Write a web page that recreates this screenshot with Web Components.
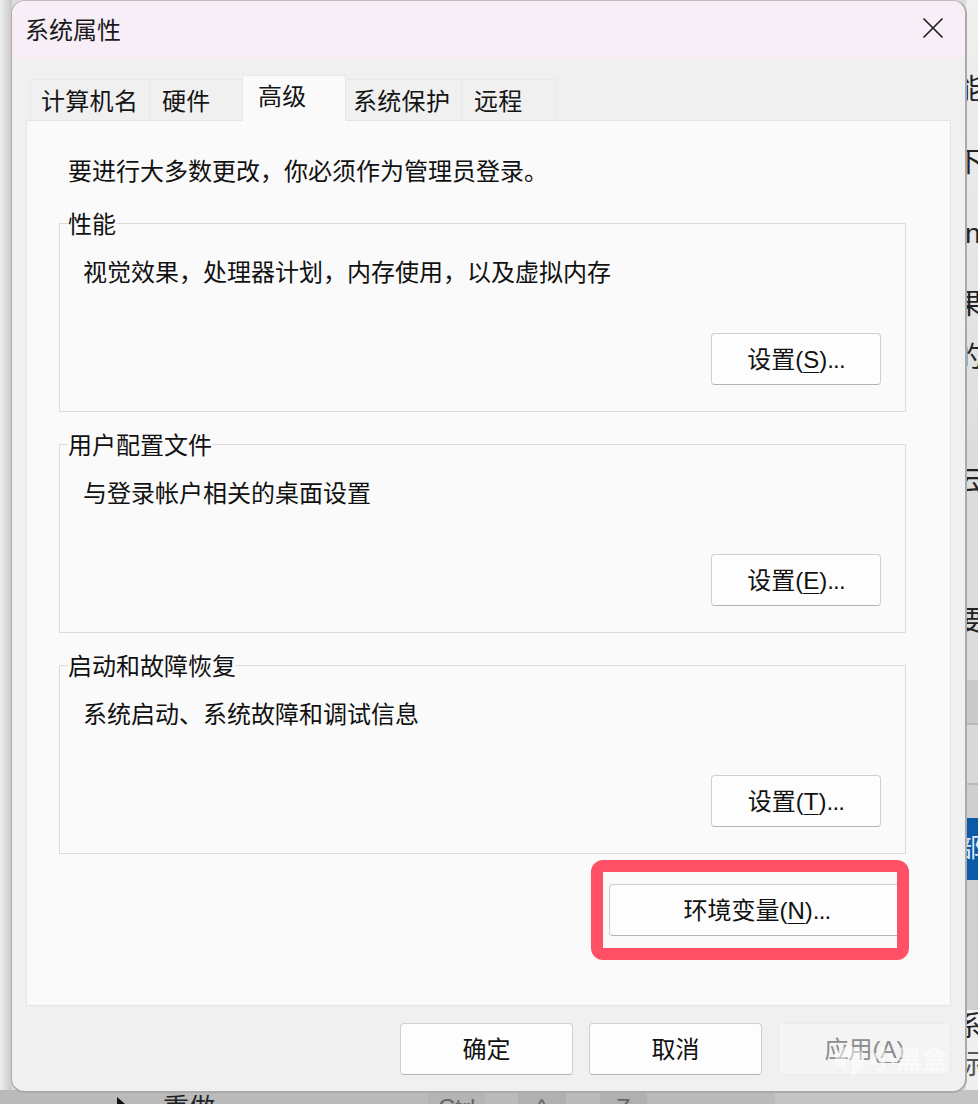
<!DOCTYPE html>
<html>
<head>
<meta charset="utf-8">
<title>系统属性</title>
<style>
  html, body { margin: 0; padding: 0; height: 1104px; overflow: hidden; }
  body { background: #e0e0e0; font-family: "Liberation Sans", "Noto Sans CJK SC", sans-serif; color: #111; }
</style>
</head>
<body>
<desk-backdrop></desk-backdrop>
<sys-window heading="系统属性">
  <sys-tabs slot="tabs">
    <sys-tab style="--w:120px;--p:10px">计算机名</sys-tab>
    <sys-tab style="--w:94px;--p:12px">硬件</sys-tab>
    <sys-tab active style="--w:104px;--p:15px">高级</sys-tab>
    <sys-tab style="--w:117px;--p:7px">系统保护</sys-tab>
    <sys-tab style="--w:95px;--p:12px">远程</sys-tab>
  </sys-tabs>
  <p-note>要进行大多数更改，你必须作为管理员登录。</p-note>
  <sys-group legend="性能" hint="视觉效果，处理器计划，内存使用，以及虚拟内存" key="S"></sys-group>
  <sys-group legend="用户配置文件" hint="与登录帐户相关的桌面设置" key="E"></sys-group>
  <sys-group legend="启动和故障恢复" hint="系统启动、系统故障和调试信息" key="T"></sys-group>
  <red-frame>
    <sys-button wide label="环境变量" key="N" tail="..."></sys-button>
  </red-frame>
  <sys-button slot="footer" style="--btn-w:173px" label="确定"></sys-button>
  <sys-button slot="footer" style="--btn-w:173px" label="取消"></sys-button>
  <sys-button slot="footer" style="--btn-w:173px" disabled label="应用" key="A"></sys-button>
</sys-window>
<box-mark></box-mark>
<script>
class DeskBackdrop extends HTMLElement {
  constructor() {
    super();
    this.attachShadow({ mode: "open" });
    const bits = [
      ["能", 90, 955], ["下", 163, 955], ["n", 234, 965], ["果", 305, 955], ["的", 358, 955], ["云", 482, 955], ["要", 622, 955]
    ];
    this.shadowRoot.innerHTML = `
<style>
  :host { position: absolute; inset: 0; display: block; overflow: hidden; background: #dcdcdc; font: 28px/34px "Liberation Sans", "Noto Sans CJK SC", sans-serif; color: #222; }
  .left { position: absolute; left: 0; top: 0; bottom: 0; width: 12px; background: linear-gradient(90deg, #ededed, #c8c8c8); }
  .top { position: absolute; left: 966px; top: 0; width: 12px; height: 440px; background: linear-gradient(180deg, #f0f0f0, #dedede); }
  .bit { position: absolute; }
  .band { position: absolute; left: 966px; width: 12px; }
  .blue { position: absolute; left: 966px; top: 818px; width: 12px; height: 62px; background: #0b5aa8; color: #dfe9f4; font-size: 26px; line-height: 60px; overflow: hidden; }
  .blue span { margin-left: -10px; }
  .bottom { position: absolute; left: 0; right: 0; top: 1090px; height: 14px; background: #bababa; }
  .seg { position: absolute; top: 1090px; height: 14px; }
  .row { position: absolute; top: 1091px; font-size: 26px; line-height: 34px; color: #222; }
  .muted { color: #666; font-size: 24px; }
</style>
<div class="left"></div>
<div class="top"></div>
<div class="band" style="top:680px;height:43px;background:#c9c9c9"></div>
<div class="band" style="top:723px;height:2px;background:#b9b9b9"></div>
<div class="band" style="top:725px;height:58px;background:#d8d8d8"></div>
<div class="band" style="top:783px;height:2px;background:#b9b9b9"></div>
<div class="band" style="top:785px;height:33px;background:#cfcfcf"></div>
<div class="band" style="top:880px;height:130px;background:#d0d0d0"></div>
<div class="band" style="top:1010px;height:82px;background:#efefef"></div>
${bits.map(([t, y, x]) => `<span class="bit" style="left:${x}px;top:${y - 17}px">${t}</span>`).join("")}
<div class="blue"><span>部</span></div>
<span class="bit" style="left:955px;top:1010px">系</span>
<span class="bit" style="left:955px;top:1048px;color:#555">际</span>
<div class="bottom"></div>
<div class="seg" style="left:428px;width:58px;background:#b4b4b4"></div>
<div class="seg" style="left:518px;width:48px;background:#b0b0b0"></div>
<div class="seg" style="left:600px;width:47px;background:#b0b0b0"></div>
<div class="seg" style="left:775px;right:0;background:#c4c4c4"></div>
<svg style="position:absolute;left:117px;top:1097px" width="12" height="7" viewBox="0 0 12 7"><path d="M0 0 L8 7 L0 7 Z" fill="#111"/></svg>
<span class="row" style="left:163px">重做</span>
<span class="row muted" style="left:438px">Ctrl</span>
<span class="row muted" style="left:536px">^</span>
<span class="row muted" style="left:616px">Z</span>
`;
  }
}

class SysWindow extends HTMLElement {
  constructor() {
    super();
    this.attachShadow({ mode: "open" });
  }
  connectedCallback() {
    this.shadowRoot.innerHTML = `
<style>
  :host { position: relative; display: flex; flex-direction: column; box-sizing: border-box; width: 956px; height: 1093px; margin: 0 0 0 11px; background: #f0f0f0; border: 1px solid #aaaaaa; border-top-color: #bdbdbd; border-width: 1px 2px 2px 1px; border-radius: 14px; overflow: hidden; }
  .title { display: flex; align-items: center; justify-content: space-between; box-sizing: border-box; height: 57px; flex: none; padding: 0 21px 3px 13px; background: #f8eef8; font-size: 24px; color: #1a1a1a; }
  .title svg { display: block; }
  .tabs { padding: 17px 0 0 18px; flex: none; }
  .panel { box-sizing: border-box; flex: none; width: 925px; height: 886px; margin-left: 14px; padding: 36px 44px 0 32px; background: #fafafa; border: 1px solid #e4e4e4; display: flex; flex-direction: column; }
  .footer { display: flex; gap: 16px; justify-content: flex-end; padding: 17px 14px 0 0; }
</style>
<div class="title"><span>${this.getAttribute("heading")}</span>
  <svg width="22" height="22" viewBox="0 0 22 22"><path d="M1.5 1.5 L20.5 20.5 M20.5 1.5 L1.5 20.5" stroke="#222" stroke-width="1.7" fill="none"/></svg>
</div>
<div class="tabs"><slot name="tabs"></slot></div>
<div class="panel"><slot></slot></div>
<div class="footer"><slot name="footer"></slot></div>
`;
  }
}

class SysTabs extends HTMLElement {
  constructor() {
    super();
    this.attachShadow({ mode: "open" });
    this.shadowRoot.innerHTML = `
<style>
  :host { display: flex; align-items: flex-end; height: 46px; margin-bottom: -1px; position: relative; z-index: 1; }
</style>
<slot></slot>`;
  }
}

class SysTab extends HTMLElement {
  constructor() {
    super();
    this.attachShadow({ mode: "open" });
    this.shadowRoot.innerHTML = `
<style>
  :host { display: block; box-sizing: border-box; flex: none; width: var(--w); height: 42px; padding: 7px 0 0 var(--p); font-size: 24px; letter-spacing: .3px; line-height: 30px; background: #f0f0f0; border: 1px solid #e8e8e8; border-bottom: 1px solid #e4e4e4; margin-right: -1px; color: #151515; white-space: nowrap; }
  :host([active]) { height: 46px; padding-top: 6px; background: #fafafa; border-bottom-color: #fafafa; position: relative; z-index: 1; }
</style>
<slot></slot>`;
  }
}

class PNote extends HTMLElement {
  constructor() {
    super();
    this.attachShadow({ mode: "open" });
    this.shadowRoot.innerHTML = `
<style>
  :host { display: block; height: 30px; margin: 0 0 36px 9px; font-size: 24px; line-height: 30px; color: #111; }
</style>
<slot></slot>`;
  }
}

class SysGroup extends HTMLElement {
  constructor() {
    super();
    this.attachShadow({ mode: "open" });
  }
  connectedCallback() {
    this.shadowRoot.innerHTML = `
<style>
  :host { position: relative; display: flex; flex-direction: column; box-sizing: border-box; height: 189px; flex: none; margin-bottom: 32px; padding: 34px 24px 26px 23px; border: 1px solid #dcdcdc; }
  .legend { position: absolute; left: 8px; top: -14px; font-size: 24px; line-height: 30px; background: #fafafa; color: #111; }
  .hint { height: 30px; font-size: 24px; line-height: 30px; color: #111; }
  .row { margin-top: auto; display: flex; justify-content: flex-end; }
</style>
<span class="legend">${this.getAttribute("legend")}</span>
<div class="hint">${this.getAttribute("hint")}</div>
<div class="row"><sys-button label="设置" key="${this.getAttribute("key")}" tail="..."></sys-button></div>
`;
  }
}

class RedFrame extends HTMLElement {
  constructor() {
    super();
    this.attachShadow({ mode: "open" });
    this.shadowRoot.innerHTML = `
<style>
  :host { position: absolute; left: 579px; top: 859px; display: block; box-sizing: border-box; width: 318px; height: 100px; padding: 12px 0 0 6px; border: 12px solid #ff5065; border-radius: 12px; background: #fafafa; overflow: hidden; }
</style>
<slot></slot>`;
  }
}

class SysButton extends HTMLElement {
  constructor() {
    super();
    this.attachShadow({ mode: "open" });
  }
  connectedCallback() {
    const key = this.getAttribute("key");
    const tail = this.getAttribute("tail") || "";
    this.shadowRoot.innerHTML = `
<style>
  :host { display: flex; align-items: center; justify-content: center; box-sizing: border-box; width: var(--btn-w, 170px); height: 52px; flex: none; padding-bottom: 4px; font-size: 24px; color: #111; background: #fdfdfd; border: 1px solid #cfcfcf; border-bottom-color: #b4b4b4; border-radius: 4px; white-space: nowrap; }
  :host([wide]) { width: 296px; }
  :host([disabled]) { color: #8c8c8c; background: #f4f4f4; border-color: #ebebeb; }
  u { text-underline-offset: 4px; text-decoration-thickness: 1px; }
  .tail { letter-spacing: -.8px; }
</style>
<span>${this.getAttribute("label")}${key ? `(<u>${key}</u>)<span class="tail">${tail}</span>` : ""}</span>`;
  }
}

// watermark sits over the dialog's bottom right corner
class BoxMark extends HTMLElement {
  constructor() {
    super();
    this.attachShadow({ mode: "open" });
    this.shadowRoot.innerHTML = `
<style>
  :host { position: absolute; left: 832px; top: 1042px; display: flex; align-items: center; gap: 4px; height: 38px; font: bold 26px/30px "Noto Sans CJK SC", sans-serif; color: rgba(255,255,255,.62); }
  svg { display: block; }
  span { margin-top: -6px; }
</style>
<svg width="34" height="38" viewBox="0 0 34 38"><path d="M3 10 L17 3 L31 10 V25 L20 35 V18 L14 15 V28 L3 22 Z" fill="rgba(255,255,255,.5)"/></svg>
<span>小黑盒</span>`;
  }
}

customElements.define("desk-backdrop", DeskBackdrop);
customElements.define("sys-window", SysWindow);
customElements.define("sys-tabs", SysTabs);
customElements.define("sys-tab", SysTab);
customElements.define("p-note", PNote);
customElements.define("sys-group", SysGroup);
customElements.define("red-frame", RedFrame);
customElements.define("sys-button", SysButton);
customElements.define("box-mark", BoxMark);
</script>
</body>
</html>
